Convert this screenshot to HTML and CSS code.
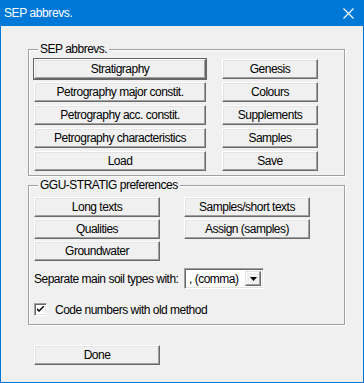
FILE: index.html
```html
<!DOCTYPE html>
<html lang="en">
<head>
    <meta charset="UTF-8">
    <title>SEP abbrevs.</title>
    <link rel="stylesheet" href="styles.css">
</head>
<body>
    <div class="window">
        <div class="titlebar">
            <span class="title">SEP abbrevs.</span>
            <svg class="close" width="11" height="11" viewBox="0 0 11 11">
                <path d="M0.5 0.5 L10.5 10.5 M10.5 0.5 L0.5 10.5" stroke="#fff" stroke-width="1.1" fill="none"/>
            </svg>
        </div>

        <div class="client">
            <div class="group group-sep">
                <span class="group-title">SEP abbrevs.</span>
                <div class="grid-sep">
                    <button class="btn default">Stratigraphy</button>
                    <button class="btn">Genesis</button>
                    <button class="btn">Petrography major constit.</button>
                    <button class="btn">Colours</button>
                    <button class="btn">Petrography acc. constit.</button>
                    <button class="btn">Supplements</button>
                    <button class="btn">Petrography characteristics</button>
                    <button class="btn">Samples</button>
                    <button class="btn">Load</button>
                    <button class="btn">Save</button>
                </div>
            </div>

            <div class="group group-pref">
                <span class="group-title">GGU-STRATIG preferences</span>
                <div class="grid-pref">
                    <button class="btn">Long texts</button>
                    <button class="btn">Samples/short texts</button>
                    <button class="btn">Qualities</button>
                    <button class="btn">Assign (samples)</button>
                    <button class="btn">Groundwater</button>
                </div>
                <div class="sep-row">
                    <span class="sep-label">Separate main soil types with:</span>
                    <div class="combo">
                        <span class="combo-text">, (comma)</span>
                        <span class="combo-arrow">
                            <svg width="7" height="4" viewBox="0 0 7 4"><path d="M0 0 H7 L3.5 4 Z" fill="#000"/></svg>
                        </span>
                    </div>
                </div>
                <label class="check-row">
                    <span class="checkbox">
                        <svg width="7" height="7" viewBox="0 0 7 7"><path d="M0 2 L0 4 L2 6 L7 1 L7 -1 L2 4 Z" fill="#000"/></svg>
                    </span>
                    Code numbers with old method
                </label>
            </div>

            <button class="btn done">Done</button>
        </div>
    </div>
</body>
</html>
```

FILE: styles.css
```css
* {
    margin: 0;
    padding: 0;
    box-sizing: border-box;
}

body {
    width: 364px;
    height: 383px;
    overflow: hidden;
    background-color: #f0f0f0;
    font-family: "Liberation Sans", Arial, sans-serif;
    font-size: 12px;
    letter-spacing: -0.5px;
    color: #000000;
    white-space: nowrap;
}

.window {
    width: 364px;
    height: 383px;
    border: 1px solid #0078d7;
    border-top: none;
    display: flex;
    flex-direction: column;
}

.titlebar {
    height: 26px;
    background-color: #0078d7;
    color: #ffffff;
    display: flex;
    align-items: center;
    justify-content: space-between;
    padding: 0 9px 0 3px;
    flex-shrink: 0;
}

.title {
    font-size: 12px;
    letter-spacing: -0.4px;
}

.client {
    padding: 23px 0 0 27px;
}

.group {
    position: relative;
    width: 317px;
    border: 1px solid #a0a0a0;
    box-shadow: 1px 1px 0 #ffffff, inset 1px 1px 0 #ffffff;
}

.group-title {
    position: absolute;
    top: -8px;
    left: 9px;
    padding: 0 2px;
    line-height: 15px;
    background-color: #f0f0f0;
}

.group-sep {
    height: 127px;
    padding: 9px 0 0 5px;
}

.grid-sep {
    display: grid;
    grid-template-columns: 172px 96px;
    grid-auto-rows: 20px;
    column-gap: 16px;
    row-gap: 3px;
}

.group-pref {
    height: 140px;
    margin-top: 9px;
    padding: 11px 0 0 5px;
}

.grid-pref {
    display: grid;
    grid-template-columns: 126px 126px;
    grid-auto-rows: 20px;
    column-gap: 24px;
    row-gap: 2px;
}

.btn {
    font-family: inherit;
    font-size: 12px;
    letter-spacing: -0.5px;
    color: #000000;
    background-color: #f0f0f0;
    border: 1px solid;
    border-color: #ffffff #696969 #696969 #ffffff;
    box-shadow: inset -1px -1px 0 #a0a0a0, inset 1px 1px 0 #e3e3e3;
    line-height: 16px;
    padding: 0;
}

.btn.default {
    outline: 1px solid #646464;
}

.sep-row {
    display: flex;
    align-items: center;
    height: 21px;
    margin-top: 7px;
}

.sep-label {
    width: 150px;
}

.combo {
    width: 80px;
    height: 21px;
    display: flex;
    background-color: #ffffff;
    border: 1px solid;
    border-color: #a0a0a0 #ffffff #ffffff #a0a0a0;
    box-shadow: inset 1px 1px 0 #696969, inset -1px -1px 0 #e3e3e3;
    padding: 2px;
}

.combo-text {
    flex: 1;
    display: flex;
    align-items: center;
    padding-left: 2px;
}

.combo-arrow {
    width: 16px;
    display: flex;
    align-items: center;
    justify-content: center;
    background-color: #f0f0f0;
    border: 1px solid;
    border-color: #e3e3e3 #696969 #696969 #e3e3e3;
    box-shadow: inset -1px -1px 0 #a0a0a0, inset 1px 1px 0 #ffffff;
}

.check-row {
    display: flex;
    align-items: center;
    gap: 8px;
    height: 13px;
    margin-top: 14px;
}

.checkbox {
    width: 13px;
    height: 13px;
    display: flex;
    align-items: center;
    justify-content: center;
    background-color: #ffffff;
    border: 1px solid;
    border-color: #a0a0a0 #ffffff #ffffff #a0a0a0;
    box-shadow: inset 1px 1px 0 #696969, inset -1px -1px 0 #e3e3e3;
}

.done {
    display: block;
    width: 126px;
    height: 20px;
    margin-top: 20px;
    margin-left: 6px;
}
```
